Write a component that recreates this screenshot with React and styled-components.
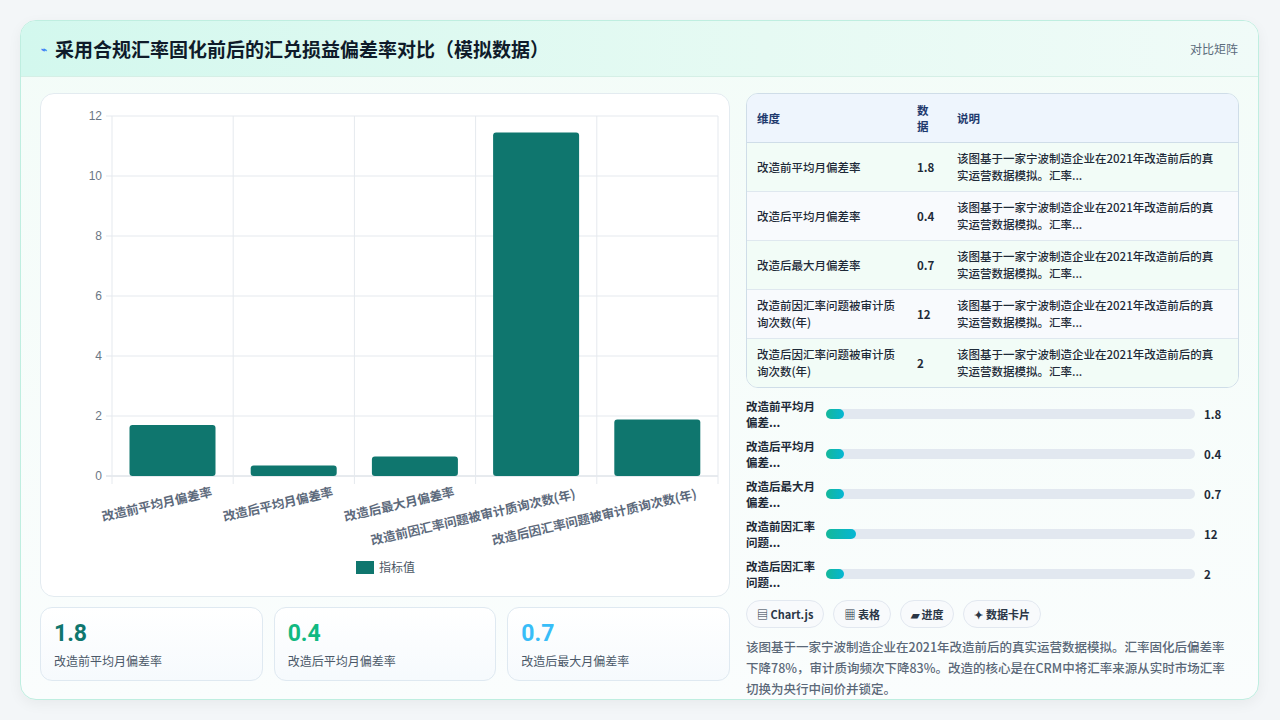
import React from "react";
import styled, { createGlobalStyle } from "styled-components";

const G = createGlobalStyle`
  body{margin:0;background:#f3f6f8;font-family:"Noto Sans CJK SC","Noto Sans",sans-serif;}
`;
const Page = styled.div`padding:20px 21px 22px 20px;height:720px;box-sizing:border-box;`;
const Card = styled.div`height:678px;border:1px solid #bfeee0;border-radius:16px;background:linear-gradient(180deg,#f3fcf8,#fafdfd);box-shadow:0 4px 14px rgba(0,0,0,.05);overflow:hidden;display:flex;flex-direction:column;`;
const Header = styled.div`height:55px;flex:none;display:flex;align-items:center;justify-content:space-between;padding:0 20px 0 20px;background:linear-gradient(90deg,#d3f8ee,#e6faf3 60%,#f0fbf8);border-bottom:1px solid #d5efe6;`;
const Title = styled.h1`margin:0;font-size:19px;font-weight:700;color:#0f1b2a;display:flex;align-items:center;gap:8px;`;
const Icon = styled.span`color:#3b82f6;font-size:10px;`;
const HeadRight = styled.span`font-size:12px;color:#5b6b7b;`;
const Body = styled.div`flex:1;display:flex;gap:16px;padding:16px 19px 0 19px;`;
const Left = styled.div`width:690px;display:flex;flex-direction:column;gap:10px;`;
const ChartBox = styled.div`height:504px;background:#fff;border:1px solid #e3ebf0;border-radius:14px;box-sizing:border-box;overflow:hidden;`;
const Kpis = styled.div`display:grid;grid-template-columns:repeat(3,1fr);gap:11px;`;
const Kpi = styled.div`height:74px;box-sizing:border-box;border:1px solid #dfe9f1;border-radius:12px;background:linear-gradient(180deg,#fff,#f6fafd);padding:12px 13px;`;
const KVal = styled.div`font-family:"Roboto",sans-serif;font-weight:700;font-size:23px;color:${p=>p.c};line-height:28px;`;
const KLab = styled.div`font-size:12px;color:#4a5868;margin-top:4px;`;
const Right = styled.div`flex:1;display:flex;flex-direction:column;`;
const Table = styled.table`width:100%;border-collapse:separate;border-spacing:0;border:1px solid #cfdde8;border-radius:12px;overflow:hidden;font-size:11.5px;color:#1e2a38;`;
const Th = styled.th`background:#eef5fd;color:#1e3a6e;font-weight:700;text-align:left;padding:0 10px;height:48px;border-bottom:1px solid #cfdde8;line-height:16px;`;
const Td = styled.td`padding:0 10px;height:48px;border-bottom:${p=>p.last?"none":"1px solid #dfe8ef"};background:${p=>p.alt?"#f8fafd":"#f2fcf7"};line-height:17px;font-weight:${p=>p.b?600:500};`;
const Bars = styled.div`display:flex;flex-direction:column;gap:8px;margin-top:10px;`;
const BRow = styled.div`display:flex;align-items:center;height:32px;`;
const BLab = styled.div`width:80px;font-size:11.5px;font-weight:600;color:#1e2a38;line-height:16px;`;
const Track = styled.div`flex:1;height:10px;border-radius:5px;background:#e2e8f0;`;
const Fill = styled.div`height:100%;border-radius:5px;background:linear-gradient(90deg,#14b89a,#06b6d4);`;
const BVal = styled.div`width:35px;padding-left:9px;font-size:11.5px;font-weight:700;color:#1e2a38;`;
const Chips = styled.div`display:flex;gap:9px;margin-top:10px;`;
const Chip = styled.span`height:28px;box-sizing:border-box;padding:0 10px;border:1px solid #e2e8f0;border-radius:14px;background:#f8fafc;font-size:11px;font-weight:600;color:#2a3646;display:flex;align-items:center;`;
const Para = styled.p`margin:8px 0 0;font-size:12.5px;line-height:21px;color:#5a6878;font-weight:500;padding-right:8px;`;

const cats=["改造前平均月偏差率","改造后平均月偏差率","改造后最大月偏差率","改造前因汇率问题被审计质询次数(年)","改造后因汇率问题被审计质询次数(年)"];
const vals=[1.7,0.35,0.65,11.45,1.88];
const rows=[["改造前平均月偏差率","1.8"],["改造后平均月偏差率","0.4"],["改造后最大月偏差率","0.7"],["改造前因汇率问题被审计质询次数(年)","12"],["改造后因汇率问题被审计质询次数(年)","2"]];
const bars=[["改造前平均月偏差...","1.8",5],["改造后平均月偏差...","0.4",5],["改造后最大月偏差...","0.7",5],["改造前因汇率问题...","12",8],["改造后因汇率问题...","2",5]];
const desc="该图基于一家宁波制造企业在2021年改造前后的真实运营数据模拟。汇率...";

function Chart(){
  const x0=71,x1=677,y0=382,step=30,cw=(x1-x0)/5;
  return <svg width="690" height="503" style={{display:"block"}}>
    {[0,2,4,6,8,10,12].map(v=>{const y=y0-v*step;return <g key={v}>
      <line x1={x0-6} x2={x1} y1={y} y2={y} stroke={v===0?"#cfd6de":"#e5e9ee"}/>
      <text x={x0-10} y={y+4} textAnchor="end" fontSize="12" fill="#6b7785" fontFamily="Liberation Sans">{v}</text></g>})}
    {[0,1,2,3,4,5].map(i=><line key={i} x1={x0+i*cw} x2={x0+i*cw} y1={y0-12*step} y2={y0+8} stroke="#e5e9ee"/>)}
    {vals.map((v,i)=><rect key={i} x={x0+i*cw+17.5} width={86} y={y0-v*step} height={v*step} rx="3" fill="#0f766e"/>)}
    {cats.map((c,i)=>{const ex=x0+i*cw+cw/2+40;const ey=i<3?y0+20:y0+22;return <text key={i} transform={`translate(${ex},${ey}) rotate(-13)`} textAnchor="end" fontSize="12.5" fontWeight="600" fill="#5d6a7c" fontFamily="Noto Sans CJK SC">{c}</text>})}
    <rect x="315" y="467" width="18" height="13" fill="#0f766e"/>
    <text x="338" y="478" fontSize="12" fill="#4b5563" fontFamily="Noto Sans CJK SC">指标值</text>
  </svg>;
}

export default function App(){
  return <Page><G/><Card>
    <Header><Title><Icon>⌁</Icon>采用合规汇率固化前后的汇兑损益偏差率对比（模拟数据）</Title><HeadRight>对比矩阵</HeadRight></Header>
    <Body>
      <Left>
        <ChartBox><Chart/></ChartBox>
        <Kpis>
          <Kpi><KVal c="#0f766e">1.8</KVal><KLab>改造前平均月偏差率</KLab></Kpi>
          <Kpi><KVal c="#10b981">0.4</KVal><KLab>改造后平均月偏差率</KLab></Kpi>
          <Kpi><KVal c="#38bdf8">0.7</KVal><KLab>改造后最大月偏差率</KLab></Kpi>
        </Kpis>
      </Left>
      <Right>
        <Table><thead><tr><Th style={{width:140}}>维度</Th><Th style={{width:20}}>数<br/>据</Th><Th>说明</Th></tr></thead>
          <tbody>{rows.map((r,i)=><tr key={i}>
            <Td alt={i%2} last={i===4}>{r[0]}</Td><Td alt={i%2} last={i===4} b>{r[1]}</Td><Td alt={i%2} last={i===4}>{desc.slice(0,24)}<br/>{desc.slice(24)}</Td></tr>)}</tbody>
        </Table>
        <Bars>{bars.map((b,i)=><BRow key={i}><BLab>{b[0].slice(0,6)}<br/>{b[0].slice(6)}</BLab><Track><Fill style={{width:b[2]+"%"}}/></Track><BVal>{b[1]}</BVal></BRow>)}</Bars>
        <Chips><Chip>▤ Chart.js</Chip><Chip>▦ 表格</Chip><Chip>▰ 进度</Chip><Chip>✦ 数据卡片</Chip></Chips>
        <Para>该图基于一家宁波制造企业在2021年改造前后的真实运营数据模拟。汇率固化后偏差率下降78%，审计质询频次下降83%。改造的核心是在CRM中将汇率来源从实时市场汇率切换为央行中间价并锁定。</Para>
      </Right>
    </Body>
  </Card></Page>;
}
